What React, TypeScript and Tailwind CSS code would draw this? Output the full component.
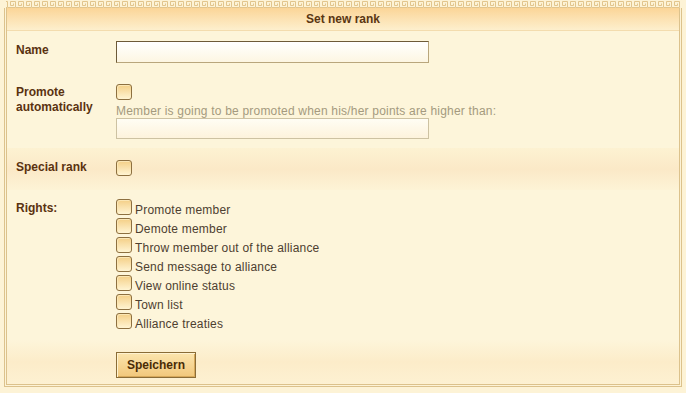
const rights = [
  'Promote member',
  'Demote member',
  'Throw member out of the alliance',
  'Send message to alliance',
  'View online status',
  'Town list',
  'Alliance treaties',
]

function Box() {
  return (
    <span className="inline-block h-[16px] w-[16px] shrink-0 rounded-[3px] border border-[#8d7040] bg-gradient-to-b from-[#f4cf86] to-[#fff4d2] shadow-[inset_1px_1px_0_#fbe6b4]" />
  )
}

function Meander() {
  return (
    <svg width="686" height="8" className="block">
      <defs>
        <pattern id="mk" width="8" height="8" patternUnits="userSpaceOnUse">
          <path d="M0 7.5H7.5V1.5H2.5V5.5H5.5V3.5" fill="none" stroke="#e2c58c" strokeWidth="1" />
        </pattern>
      </defs>
      <rect width="686" height="8" fill="#fdf3d6" />
      <rect x="6" y="0" width="674" height="8" fill="url(#mk)" />
    </svg>
  )
}

export default function App() {
  return (
    <div className="h-[393px] w-[686px] overflow-hidden bg-[#fdf3d6] font-['Liberation_Sans',Arial,sans-serif] text-[12px]">
      <Meander />
      <div className="mx-[4px] border-x-[3px] border-b-[3px] border-double border-[#dcc28c]">
        {/* header */}
        <div className="flex h-[23px] items-center justify-center border-b border-[#f3dcae] bg-gradient-to-b from-[#fbd597] to-[#fdefcd] font-bold text-[#5a3612]">
          Set new rank
        </div>

        {/* name */}
        <div className="flex h-[44px] bg-[#fdf5da] pt-[10px]">
          <div className="w-[109px] pl-[9px] font-bold text-[#5a3210]">Name</div>
          <div className="h-[22px] w-[313px] border border-t-[#6d5a38] border-l-[#6d5a38] border-b-[#b9a67c] border-r-[#b9a67c] bg-gradient-to-b from-[#ffffff] to-[#fdf6e2]" />
        </div>

        {/* promote automatically */}
        <div className="flex h-[73px] bg-[#fdf5da] pt-[9px]">
          <div className="w-[109px] pl-[9px] pt-[1px] font-bold leading-[15px] text-[#5a3210]">
            Promote
            <br />
            automatically
          </div>
          <div className="flex flex-col">
            <Box />
            <div className="mt-[4px] leading-[14px] tracking-[0.2px] text-[#a49a7e]">
              Member is going to be promoted when his/her points are higher than:
            </div>
            <div className="h-[21px] w-[313px] border border-[#cdc2a2] bg-gradient-to-b from-[#fffdf4] to-[#fdf3dc]" />
          </div>
        </div>

        {/* special rank */}
        <div className="flex h-[42px] items-start bg-gradient-to-b from-[#fdf2d2] via-[#fbe9c7] to-[#fdf3d6] pt-[12px]">
          <div className="w-[109px] pl-[9px] font-bold leading-[15px] text-[#5a3210]">Special rank</div>
          <Box />
        </div>

        {/* rights */}
        <div className="flex h-[150px] bg-[#fdf5da] pt-[9px]">
          <div className="w-[109px] pl-[9px] font-bold text-[#5a3210]">Rights:</div>
          <div className="flex flex-col">
            {rights.map((r) => (
              <div key={r} className="flex h-[19px] items-start gap-[3px]">
                <Box />
                <span className="mt-[4px] leading-[15px] tracking-[0.2px] text-[#4d4030]">{r}</span>
              </div>
            ))}
          </div>
        </div>

        {/* save */}
        <div className="flex h-[44px] bg-gradient-to-b from-[#fdf5da] via-[#fcecc9] to-[#fdf1d2] pl-[109px] pt-[12px]">
          <button className="h-[26px] w-[80px] border border-[#8a6c36] bg-gradient-to-b from-[#fce5ad] to-[#f1c77a] font-bold text-[#4a2c06] shadow-[inset_1px_1px_0_#fff2cf,inset_-1px_-1px_0_#d6a85a]">
            Speichern
          </button>
        </div>
      </div>
    </div>
  )
}
